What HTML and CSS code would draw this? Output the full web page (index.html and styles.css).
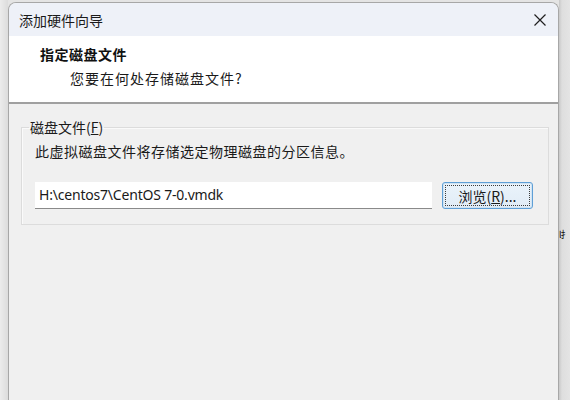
FILE: index.html
```html
<!DOCTYPE html>
<html lang="zh-CN">
<head>
    <meta charset="UTF-8">
    <meta name="viewport" content="width=device-width, initial-scale=1.0">
    <title>添加硬件向导</title>
    <link rel="stylesheet" href="styles.css">
</head>
<body>
    <div class="desk-left"></div>

    <div class="wizard">
        <div class="titleBar">
            <span class="titleText">添加硬件向导</span>
            <svg class="closeIcon" width="14" height="14" viewBox="0 0 14 14">
                <path d="M1.5 1.5 L12.5 12.5 M12.5 1.5 L1.5 12.5" stroke="#1f1f1f" stroke-width="1.2" fill="none"/>
            </svg>
        </div>

        <div class="header">
            <h1 class="headTitle">指定磁盘文件</h1>
            <p class="headSub">您要在何处存储磁盘文件?</p>
        </div>

        <div class="content">
            <fieldset class="groupBox">
                <legend class="groupLabel">磁盘文件(<u>F</u>)</legend>
                <p class="groupText">此虚拟磁盘文件将存储选定物理磁盘的分区信息。</p>
                <div class="fileRow">
                    <input class="fileInput" type="text" value="H:\centos7\CentOS 7-0.vmdk">
                    <button class="browseBtn"><span class="focusRect">浏览(<u>R</u>)...</span></button>
                </div>
            </fieldset>
        </div>
    </div>

    <div class="desk-right">
        <span class="behindText">l扌</span>
    </div>
</body>
</html>
```

FILE: styles.css
```css
* {
    box-sizing: border-box;
}

body {
    margin: 0;
    padding: 0;
    width: 570px;
    height: 400px;
    overflow: hidden;
    display: flex;
    background-color: #e4e4e4;
    font-family: "Noto Sans", "Noto Sans CJK SC", sans-serif;
    color: #1a1a1a;
}

.desk-left {
    width: 8px;
    flex-shrink: 0;
    background: linear-gradient(to right, #ececec, #dcdcdc);
}

.wizard {
    width: 551px;
    flex-shrink: 0;
    margin-top: 2px;
    display: flex;
    flex-direction: column;
    border: 1px solid #a7a7a7;
    border-bottom: none;
    border-radius: 8px 8px 0 0;
    overflow: hidden;
    background-color: #f0f0f0;
}

.titleBar {
    height: 33px;
    display: flex;
    align-items: center;
    justify-content: space-between;
    padding: 0 11px 0 10px;
    background-color: #eef1f8;
}

.titleText {
    font-family: "Noto Sans CJK SC", sans-serif;
    font-size: 14px;
    color: #1a1a1a;
}

.closeIcon {
    display: block;
}

.header {
    height: 68px;
    background-color: #ffffff;
    border-bottom: 2px solid #a0a0a0;
    padding: 6px 0 0 31px;
}

.headTitle {
    margin: 0;
    font-family: "Noto Sans CJK SC", sans-serif;
    font-size: 14px;
    font-weight: 700;
    line-height: 24px;
    letter-spacing: 0.5px;
    color: #111111;
}

.headSub {
    margin: 0;
    padding-left: 30px;
    font-family: "Noto Sans CJK SC", sans-serif;
    font-size: 14px;
    line-height: 24px;
    letter-spacing: 1px;
    color: #1a1a1a;
}

.content {
    flex: 1;
    padding: 13px 9px 0 12px;
}

.groupBox {
    margin: 0;
    height: 108px;
    border: 1px solid #dcdcdc;
    box-shadow: inset 1px 1px 0 #fafafa;
    padding: 0 15px 0 13px;
}

.groupLabel {
    font-family: "Noto Sans CJK SC", sans-serif;
    font-size: 14px;
    padding: 0 1px;
    margin-left: -6px;
    line-height: 20px;
    color: #1a1a1a;
}

.groupText {
    margin: 4px 0 0 0;
    font-family: "Noto Sans CJK SC", sans-serif;
    font-size: 14px;
    letter-spacing: 0.5px;
    line-height: 20px;
}

.fileRow {
    display: flex;
    align-items: center;
    gap: 10px;
    margin-top: 21px;
}

.fileInput {
    width: 397px;
    height: 27px;
    border: none;
    border-bottom: 1px solid #8a8a8a;
    background-color: #ffffff;
    padding: 0 4px 2px 4px;
    font-family: "Noto Sans", sans-serif;
    font-size: 14px;
    letter-spacing: -0.2px;
    color: #1a1a1a;
    outline: none;
}

.browseBtn {
    width: 91px;
    height: 27px;
    padding: 2px;
    border: 1px solid #5f9fd6;
    border-radius: 3px;
    background: linear-gradient(#eaf3fb, #e1ecf6);
    box-shadow: inset 0 0 0 1px #cfe3f3;
    cursor: pointer;
}

.focusRect {
    display: flex;
    align-items: center;
    justify-content: center;
    height: 100%;
    border: 1px dotted #3c3c3c;
    font-family: "Noto Sans CJK SC", sans-serif;
    font-size: 14px;
    color: #1a1a1a;
}

.desk-right {
    flex: 1;
    background: linear-gradient(to right, #c8c8c8, #dedede 3px, #e4e4e4);
    overflow: hidden;
    padding-top: 228px;
    white-space: nowrap;
}

.behindText {
    display: block;
    font-family: "Noto Sans CJK SC", sans-serif;
    font-size: 9px;
    letter-spacing: -1px;
    color: #111111;
}
```
